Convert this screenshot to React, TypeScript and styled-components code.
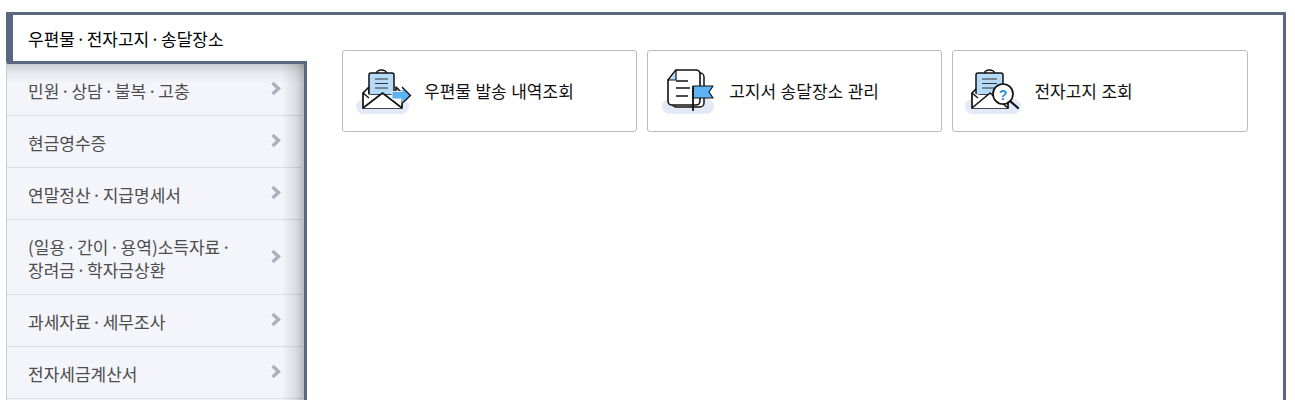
import React from "react";
import styled, { createGlobalStyle } from "styled-components";

const Global = createGlobalStyle`
  html, body { margin: 0; padding: 0; background: #fff; height: 400px; overflow: hidden; }
  body { font-family: "Noto Sans CJK KR", "Noto Sans", sans-serif; }
`;
const Frame = styled.div`
  display: flex; box-sizing: border-box; width: 1279.5px; height: 388px; margin: 12px 0 0 6px; overflow: hidden;
  border-top: 3px solid #5a6780; border-right: 3px solid #5a6780;
`;
const Side = styled.nav`
  width: 301px; flex: none; display: flex; flex-direction: column;
`;
const ActiveTab = styled.div`
  box-sizing: border-box; height: 46px; border-left: 7px solid #5a6780; padding: 0 0 0 15px;
  display: flex; align-items: center; font-size: 17px; word-spacing: -2.7px; color: #000; font-weight: 400; background: #fff;
`;
const Menu = styled.ul`
  list-style: none; margin: 0; padding: 0; flex: 1; position: relative; background: #f3f5fa;
  border-top: 3px solid #5a6780; border-right: 3px solid #5a6780; border-left: 1px solid #c9cbd0;
  &::after {
    content: ""; position: absolute; inset: 0; pointer-events: none;
    background:
      linear-gradient(to left, rgba(0,0,0,.24), rgba(0,0,0,.1) 8px, rgba(0,0,0,0) 22px),
      linear-gradient(to bottom, rgba(0,0,0,.17), rgba(0,0,0,.05) 9px, rgba(0,0,0,0) 20px);
  }
`;
const Item = styled.li<{ $tall?: boolean }>`
  box-sizing: border-box; height: ${p => (p.$tall ? 75 : 52)}px; border-bottom: 1px solid #dcdee3;
  margin-right: 2px; padding: 2px 21px 0 21px; display: flex; align-items: center; justify-content: space-between;
  font-size: 17px; line-height: 23.5px; word-spacing: -2.5px; color: #4c4c4c;
`;
const Label = styled.span` white-space: pre-line; `;
const Chevron = styled.svg` width: 10px; height: 13px; flex: none; margin-top: -4px; `;
const Content = styled.main`
  flex: 1; display: flex; gap: 10px; align-items: flex-start; padding: 35px 0 0 35px;
`;
const Card = styled.a`
  box-sizing: border-box; width: 295.2px; height: 82px; border: 1px solid #bbb; border-radius: 3px;
  background: #fff; display: flex; align-items: center; padding: 0 0 0 12px; color: #111; font-size: 17px; word-spacing: 0.7px;
`;
const Icon = styled.svg` width: 60px; height: 50px; flex: none; margin: 0 9px 0 0; `;
const CardLabel = styled.span` margin-top: -2px; `;

const Blob = ({ w = 53, x = 1 }: { w?: number; x?: number }) => (
  <rect x={x} y={33} width={w} height={15} rx={7.5} fill="#e3eaf7" />
);
const Letter = ({ x, w }: { x: number; w: number }) => (
  <g stroke="#111" strokeWidth={1.5}>
    <path d={`M${x + w / 2 - 5} 7 C${x + w / 2 - 4} 3 ${x + w / 2 + 4} 3 ${x + w / 2 + 5} 7`} fill="none" />
    <path d={`M${x} 29 V9 a2 2 0 0 1 2 -2 H${x + w - 2} a2 2 0 0 1 2 2 V29 Z`} fill="#b5dbf9" />
    <path d={`M${x + 6} 13 H${x + w - 6} M${x + 6} 17.5 H${x + w - 6} M${x + 6} 22 H${x + w - 6}`} fill="none" strokeWidth={1.2} stroke="#333" />
  </g>
);
const Envelope = ({ x, w }: { x: number; w: number }) => (
  <g stroke="#111" strokeWidth={1.6} strokeLinejoin="round" fill="#fff">
    <path d={`M${x} 27 L${x + 6} 21 V32 Z`} />
    <path d={`M${x + w} 27 L${x + w - 6} 21 V32 Z`} />
  </g>
);
const Pocket = ({ x, w }: { x: number; w: number }) => (
  <>
    <path d={`M${x} 27 L${x + 8} 29 H${x + w - 8} L${x + w} 27 V42 H${x} Z`} fill="#fff" />
    <path d={`M${x} 27 V42 H${x + w} V27`} fill="none" stroke="#111" strokeWidth={1.7} />
    <path d={`M${x} 42 L${x + w / 2} 27 L${x + w} 42`} fill="#fff" stroke="#111" strokeWidth={1.6} strokeLinejoin="round" />
    <path d={`M${x} 27 L${x + 6} 32 M${x + w} 27 L${x + w - 6} 32`} fill="none" stroke="#111" strokeWidth={1.4} />
  </>
);

const MailSend = () => (
  <Icon viewBox="0 0 60 50">
    <Blob />
    <Envelope x={8} w={39} />
    <Letter x={14} w={25} />
    <Pocket x={8} w={39} />
    <path d="M37 25.5 H47 V21 L55.5 29.5 L47 37.5 V33 H37 Z" fill="#5cb4f5" stroke="#fff" strokeWidth={0.8} />
    <path d="M47 21 L55.5 29.5 L47 37.5" fill="none" stroke="#111" strokeWidth={1.3} />
  </Icon>
);
const DocFlag = () => (
  <Icon viewBox="0 0 60 50">
    <Blob x={2} w={52} />
    <rect x={12} y={7} width={32} height={34} rx={4} fill="#fff" stroke="#111" strokeWidth={1.5} />
    <path d="M8 14 L16 4 H36 a4 4 0 0 1 4 4 V35 a4 4 0 0 1 -4 4 H12 a4 4 0 0 1 -4 -4 Z" fill="#fff" stroke="#111" strokeWidth={1.6} strokeLinejoin="round" />
    <path d="M8 14 L16 4 L16 14 Z" fill="#b5dbf9" stroke="#111" strokeWidth={1.2} strokeLinejoin="round" />
    <path d="M16 15 H28 M16 22 H30 M16 30 H28" stroke="#111" strokeWidth={1.5} />
    <path d="M33 20 H53 L49 26 L53 32 H33 Z" fill="#5cb4f5" stroke="#111" strokeWidth={1.2} strokeLinejoin="round" />
    <path d="M33 20 V45" stroke="#111" strokeWidth={1.8} />
  </Icon>
);
const MailSearch = () => (
  <Icon viewBox="0 0 60 50">
    <Blob x={0} w={56} />
    <Envelope x={7} w={36} />
    <Letter x={11} w={27} />
    <Pocket x={7} w={36} />
    <path d="M45 35 L53 42" stroke="#111" strokeWidth={2.2} strokeLinecap="round" />
    <circle cx={38} cy={28} r={10} fill="#fff" stroke="#111" strokeWidth={1.7} />
    <text x={38} y={33.5} textAnchor="middle" fontSize={14} fontWeight={700} fill="#2a8fe0" fontFamily="Liberation Sans, sans-serif">?</text>
  </Icon>
);

const items: { t: string; tall?: boolean }[] = [
  { t: "민원 · 상담 · 불복 · 고충" },
  { t: "현금영수증" },
  { t: "연말정산 · 지급명세서" },
  { t: "(일용 · 간이 · 용역)소득자료 ·\n장려금 · 학자금상환", tall: true },
  { t: "과세자료 · 세무조사" },
  { t: "전자세금계산서" },
];

export default function App() {
  return (
    <>
      <Global />
      <Frame>
        <Side>
          <ActiveTab>우편물 · 전자고지 · 송달장소</ActiveTab>
          <Menu>
            {items.map(it => (
              <Item key={it.t} $tall={it.tall}>
                <Label>{it.t}</Label>
                <Chevron viewBox="0 0 10 13">
                  <path d="M1.5 1 L7.5 6.5 L1.5 12" fill="none" stroke="#abb0bc" strokeWidth={3.4} />
                </Chevron>
              </Item>
            ))}
          </Menu>
        </Side>
        <Content>
          <Card><MailSend /><CardLabel>우편물 발송 내역조회</CardLabel></Card>
          <Card><DocFlag /><CardLabel>고지서 송달장소 관리</CardLabel></Card>
          <Card><MailSearch /><CardLabel>전자고지 조회</CardLabel></Card>
        </Content>
      </Frame>
    </>
  );
}
